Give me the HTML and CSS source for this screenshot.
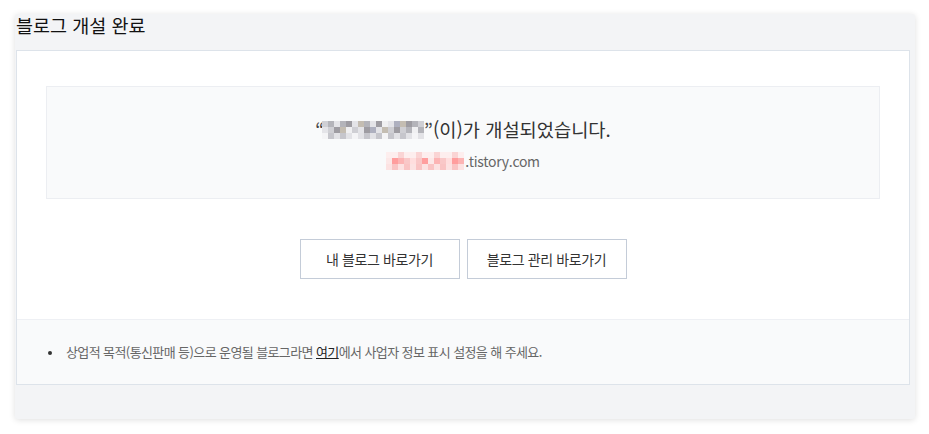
FILE: index.html
```html
<!DOCTYPE html>
<html lang="ko">
<head>
<meta charset="utf-8">
<title>블로그 개설 완료</title>
<link rel="stylesheet" href="styles.css">
</head>
<body>
<div class="dialog">
  <h1 class="title">블로그 개설 완료</h1>
  <div class="panel">
    <div class="panel-body">
      <div class="notice">
        <p class="notice-main"><span class="q">“</span><span class="mosaic grey"><i></i><i></i><i></i><i></i><i></i><i></i><i></i><i></i><i></i><i></i><i></i><i></i><i></i><i></i><i></i><i></i><i></i><i></i><i></i><i></i><i></i><i></i><i></i><i></i><i></i><i></i><i></i><i></i><i></i><i></i><i></i><i></i><i></i><i></i><i></i><i></i><i></i><i></i><i></i><i></i><i></i><i></i><i></i><i></i><i></i><i></i><i></i><i></i><i></i><i></i><i></i></span><span class="q">”</span>(이)가 개설되었습니다.</p>
        <p class="notice-url"><span class="mosaic pink"><i></i><i></i><i></i><i></i><i></i><i></i><i></i><i></i><i></i><i></i><i></i><i></i><i></i><i></i><i></i><i></i><i></i><i></i><i></i><i></i><i></i><i></i><i></i><i></i><i></i><i></i><i></i><i></i><i></i><i></i><i></i><i></i><i></i><i></i><i></i><i></i><i></i><i></i><i></i></span>.tistory.com</p>
      </div>
      <div class="actions">
        <a class="btn" href="#">내 블로그 바로가기</a>
        <a class="btn" href="#">블로그 관리 바로가기</a>
      </div>
    </div>
    <div class="panel-foot">
      <ul class="tips">
        <li>상업적 목적(통신판매 등)으로 운영될 블로그라면 <a href="#">여기</a>에서 사업자 정보 표시 설정을 해 주세요.</li>
      </ul>
    </div>
  </div>
</div>
</body>
</html>
```

FILE: styles.css
```css
* { box-sizing: border-box; }
html, body { margin: 0; background: #fff; }
body {
  padding: 14px 15px;
  font-family: "Noto Sans CJK KR", "Noto Sans", sans-serif;
  color: #333;
}
.dialog {
  width: 900px;
  height: 405px;
  background: #f3f4f6;
  border-radius: 3px;
  box-shadow: 0 1px 6px rgba(0, 0, 0, 0.13);
  padding: 0 5px 0 1px;
}
.title {
  margin: 0;
  height: 36px;
  font-size: 18.5px;
  line-height: 22px;
  font-weight: 400;
  color: #111;
}
.panel {
  background: #fff;
  border: 1px solid #dde3ea;
}
.panel-body {
  padding: 35px 29px 40px;
}
.notice {
  height: 113px;
  background: #f9fafb;
  border: 1px solid #eceef2;
  display: flex;
  flex-direction: column;
  align-items: center;
  justify-content: center;
}
.notice p { margin: 0; display: flex; align-items: center; }
.notice-main {
  font-size: 18.7px;
  line-height: 28px;
  color: #333;
}
.notice-url {
  margin-top: 8px !important;
  font-size: 14px;
  line-height: 20px;
  letter-spacing: -0.3px;
  color: #666;
}
.q { color: #444; }
.mosaic {
  display: grid;
  gap: 0;
}
.mosaic i { display: block; width: 6px; height: 6px; }
.grey { grid-template-columns: repeat(17, 6px); margin: 2px 0 0 -2px; }
.pink { grid-template-columns: repeat(13, 6px); margin-right: 1px; }
.grey i { background: #cfcfd4; }
.grey i:nth-child(2n) { background: #b4b4ba; }
.grey i:nth-child(3n) { background: #e4e4e8; }
.grey i:nth-child(5n) { background: #9e9ca2; }
.grey i:nth-child(7n) { background: #c4bdb2; }
.grey i:nth-child(11n) { background: #f0f0f2; }
.grey i:nth-child(13n) { background: #aeb0bf; }
.grey i:nth-child(n+35) { background: #e2e2e6; }
.grey i:nth-child(n+35):nth-child(2n) { background: #c6c6cc; }
.grey i:nth-child(n+35):nth-child(5n) { background: #f4f4f6; }
.pink i { background: #f9c8c8; }
.pink i:nth-child(2n) { background: #fcb4b4; }
.pink i:nth-child(3n) { background: #ffdede; }
.pink i:nth-child(5n) { background: #ff9e9e; }
.pink i:nth-child(7n) { background: #fce8e8; }
.pink i:nth-child(-n+13) { background: #fdeeee; }
.pink i:nth-child(-n+13):nth-child(3n) { background: #fad4d4; }
.pink i:nth-child(n+27) { background: #fce2e2; }
.pink i:nth-child(n+27):nth-child(2n) { background: #f9c4c4; }
.actions {
  margin-top: 40px;
  display: flex;
  justify-content: center;
  gap: 7px;
}
.btn {
  width: 160px;
  height: 40px;
  border: 1px solid #c4ccd8;
  background: #fff;
  display: flex;
  align-items: center;
  justify-content: center;
  font-size: 14px;
  letter-spacing: -0.4px;
  color: #333;
  text-decoration: none;
}
.panel-foot {
  height: 65px;
  border-top: 1px solid #eef0f4;
  background: #f9fafb;
  display: flex;
  align-items: center;
  padding-left: 29px;
}
.tips {
  margin: 0;
  padding: 0;
  list-style: none;
}
.tips li {
  position: relative;
  padding-left: 20px;
  font-size: 13px;
  line-height: 20px;
  letter-spacing: -0.6px;
  color: #666;
}
.tips li::before {
  content: "";
  position: absolute;
  left: 2px;
  top: 9px;
  width: 4px;
  height: 4px;
  border-radius: 50%;
  background: #333;
}
.tips a { color: #222; text-decoration: underline; }
```
